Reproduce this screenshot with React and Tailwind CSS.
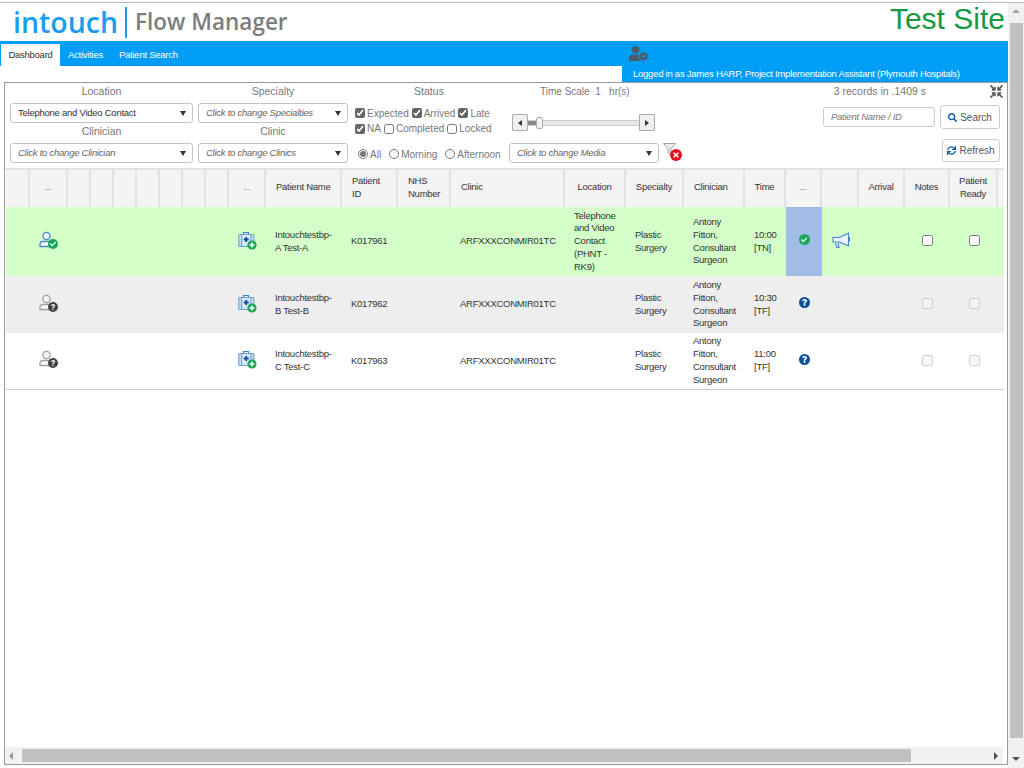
import React from 'react';
import { FaCheck, FaCompressArrowsAlt, FaQuestion, FaSearch, FaSync, FaTimes, FaUserCog } from 'react-icons/fa';

const gridCols = 'grid grid-cols-[24px_38px_23px_23px_23px_23px_23px_23px_23px_37px_76px_56px_53px_114px_61px_58px_61px_41px_36px_37px_46px_45px_48px_5px]';

const headers = ['', '...', '', '', '', '', '', '', '', '...', 'Patient Name', 'Patient ID', 'NHS Number', 'Clinic', 'Location', 'Specialty', 'Clinician', 'Time', '...', '', 'Arrival', 'Notes', 'Patient Ready'];

const rows = [
  { name: 'Intouchtestbp-A Test-A', id: 'K017961', location: 'Telephone and Video Contact (PHNT - RK9)', time: '10:00 [TN]', bg: 'bg-[#d4ffc8]', h: 'h-[69px]', arrived: true },
  { name: 'Intouchtestbp-B Test-B', id: 'K017962', location: '', time: '10:30 [TF]', bg: 'bg-[#eeeeee]', h: 'h-[57px]' },
  { name: 'Intouchtestbp-C Test-C', id: 'K017963', location: '', time: '11:00 [TF]', bg: 'bg-white', h: 'h-[56px]' },
];

function Select({ text, italic, className }) {
  return (
    <div className={`flex h-[20px] items-center justify-between rounded-[3px] border border-[#c4c4c4] bg-white pl-[7px] pr-[6px] text-[9.5px] tracking-[-0.25px] ${italic ? 'italic text-[#666]' : 'text-[#333]'} ${className}`}>
      <span className="pt-[1px]">{text}</span>
      <span className="h-0 w-0 border-x-[3.5px] border-t-[5px] border-x-transparent border-t-[#333]" />
    </div>
  );
}

function Label({ text }) {
  return <div className="flex h-[20px] justify-center pb-[4px] text-[10.5px] leading-[16px] text-[#777]">{text}</div>;
}

function Check({ label, checked }) {
  return (
    <label className="flex items-center gap-[2px] text-[10px] text-[#777]">
      <input type="checkbox" defaultChecked={checked} className="m-0 h-[10px] w-[10px] accent-[#666]" />
      {label}
    </label>
  );
}

function Radio({ label, checked }) {
  return (
    <label className="flex items-center gap-[2px] text-[10px] text-[#777]">
      <input type="radio" name="period" defaultChecked={checked} className="m-0 h-[10px] w-[10px] accent-[#777]" />
      {label}
    </label>
  );
}

function Slider() {
  return (
    <div className="flex h-[17px] w-[143px] items-center">
      <div className="flex h-[17px] w-[16px] shrink-0 items-center justify-center rounded-[1px] border border-[#aaa] bg-[#f0f0f0]">
        <span className="h-0 w-0 border-y-[3px] border-r-[4px] border-y-transparent border-r-[#333]" />
      </div>
      <div className="relative h-[6px] flex-1 border-y border-[#ccc] bg-[#e8e8e8]">
        <div className="h-full w-[8px] bg-[#888]" />
        <div className="absolute left-[8px] top-[-4px] h-[12px] w-[7px] rounded-[2px] border border-[#aaa] bg-[#f2f2f2]" />
      </div>
      <div className="flex h-[17px] w-[16px] shrink-0 items-center justify-center rounded-[1px] border border-[#aaa] bg-[#f0f0f0]">
        <span className="h-0 w-0 border-y-[3px] border-l-[4px] border-y-transparent border-l-[#333]" />
      </div>
    </div>
  );
}

function UserIcon({ arrived }) {
  const line = arrived ? '#4a86c8' : '#a0a0a0';
  return (
    <div className="relative h-[20px] w-[20px]">
      <svg width="18" height="18" viewBox="0 0 18 18" fill="none" stroke={line} strokeWidth="1.3">
        <circle cx="7.5" cy="5" r="3.6" fill={arrived ? '#e6f0ff' : '#f8f8f8'} />
        <path d="M1 15.5v-2c0-2 1.500-3 3.500-3h6v5z" fill="#fff" />
      </svg>
      <span className={`absolute left-[9px] top-[8px] flex h-[10px] w-[10px] items-center justify-center rounded-full text-white ${arrived ? 'bg-[#1aa657]' : 'bg-[#444]'}`}>
        {arrived ? <FaCheck size={6} /> : <FaQuestion size={6} />}
      </span>
    </div>
  );
}

function CaseIcon() {
  return (
    <svg width="19" height="19" viewBox="0 0 19 19" fill="none">
      <path d="M5.500 3.500v-2h5v2" stroke="#3f82c4" strokeWidth="1.200" />
      <rect x="0.800" y="3.500" width="15" height="12" rx="1" fill="#d9e8f8" stroke="#6f9fd4" strokeWidth="1.200" />
      <path d="M3.500 3.500v12M13 3.500v12" stroke="#6f9fd4" strokeWidth="1.200" />
      <path d="M8.200 6v5M5.700 8.500h5" stroke="#0b4f9c" strokeWidth="1.800" />
      <circle cx="14" cy="14" r="4.600" fill="#1aa657" />
      <path d="M14 11.500v5M11.500 14h5" stroke="#fff" strokeWidth="1.600" />
    </svg>
  );
}

function HornIcon() {
  return (
    <svg width="18" height="17" viewBox="0 0 18 17" fill="none" stroke="#4a86c8" strokeWidth="1.100">
      <path d="M1 5.500h6.500L16.500 1.200v12.600L7.500 10H1z" fill="#eaf6ff" />
      <path d="M16.500 5.500h1v3.500h-1" />
      <path d="M3.500 10l1.200 5.500h2.300L6 10" fill="#eaf6ff" />
    </svg>
  );
}

function FilterOff() {
  return (
    <div className="relative ml-[4px] h-[19px] w-[19px]">
      <svg width="13" height="13" viewBox="0 0 13 13" fill="#eee" stroke="#999" strokeWidth="0.900">
        <path d="M0.500 0.500h12L7.800 6v6L5.200 10V6z" />
      </svg>
      <span className="absolute left-[7px] top-[6px] flex h-[12px] w-[12px] items-center justify-center rounded-full bg-[#e8101f] text-white">
        <FaTimes size={8} />
      </span>
    </div>
  );
}

function HeaderRow() {
  return (
    <div className={`${gridCols} h-[39px] border-t-2 border-[#e2e2e2] bg-[#f4f4f4] text-[9.5px] leading-[12.800px] tracking-[-0.25px] text-[#333]`}>
      {headers.map((h, i) => (
        <div key={i} className={`flex items-center border-r-2 border-[#e2e2e2] pb-[2px] ${h === '...' ? 'justify-center text-[#777]' : i === 10 ? 'whitespace-nowrap pl-[10px]' : i === 11 || i === 12 || i === 13 || i === 16 ? 'px-[10px]' : 'justify-center px-[4px] text-center'}`}>
          {h}
        </div>
      ))}
      <div />
    </div>
  );
}

function Row({ r }) {
  const disabled = !r.arrived;
  const textCell = 'flex items-center px-[9px]';
  return (
    <div className={`${gridCols} ${r.h} ${r.bg} text-[9.5px] leading-[12.800px] tracking-[-0.25px] text-[#333]`}>
      <div />
      <div className="flex items-center justify-center pb-[2px]"><UserIcon arrived={r.arrived} /></div>
      <div className="col-span-7" />
      <div className="flex items-center justify-center pb-[3px] pr-[1px]"><CaseIcon /></div>
      <div className={textCell}>{r.name}</div>
      <div className={textCell}>{r.id}</div>
      <div />
      <div className={`${textCell} pr-0`}>ARFXXXCONMIR01TC</div>
      <div className={textCell}>{r.location}</div>
      <div className={textCell}>Plastic Surgery</div>
      <div className={`${textCell} pr-[4px]`}>Antony Fitton, Consultant Surgeon</div>
      <div className={textCell}>{r.time}</div>
      <div className={`flex items-center justify-center pb-[4px] ${r.arrived ? 'bg-[#a0bde8]' : ''}`}>
        <span className={`flex h-[11px] w-[11px] items-center justify-center rounded-full text-white ${r.arrived ? 'bg-[#1aa657]' : 'bg-[#0b4f9c]'}`}>
          {r.arrived ? <FaCheck size={6} /> : <FaQuestion size={7} />}
        </span>
      </div>
      <div className="flex items-center justify-center pb-[3px]">{r.arrived && <HornIcon />}</div>
      <div />
      <div className="flex items-center justify-center pb-[2px]">
        <input type="checkbox" disabled={disabled} className="m-0 h-[11px] w-[11px]" />
      </div>
      <div className="flex items-center justify-center pb-[2px]">
        <input type="checkbox" disabled={disabled} className="m-0 h-[11px] w-[11px]" />
      </div>
      <div />
    </div>
  );
}

export default function App() {
  return (
    <div className="h-[768px] w-[1024px] overflow-hidden bg-white pt-[2px] font-['Liberation_Sans',Arial,sans-serif]">
      <div className="flex h-[766px] border-t border-[#bbb]">
        <div className="flex w-[1008px] flex-col">
          <div className="flex h-[38px] justify-between pl-[13px] pr-[3px]">
            <div className="flex items-center">
              <span className="font-['Open_Sans',sans-serif] text-[28.500px] font-semibold leading-none text-[#1a9cf0]">intouch</span>
              <span className="ml-[7px] mr-[8px] h-[31px] w-[2px] bg-[#1a9cf0]" />
              <span className="font-['Open_Sans',sans-serif] text-[22.500px] font-semibold leading-none text-[#7d7d7d]">Flow Manager</span>
            </div>
            <span className="text-[30px] leading-[32px] text-[#149a43]">Test Site</span>
          </div>

          <div className="flex h-[41px]">
            <div className="h-[25px] w-[622px] bg-[#009ef7] pl-[1px] pt-[3px]">
              <div className="flex h-[22px] items-center text-[9.5px] tracking-[-0.25px] text-white">
                <span className="flex h-full w-[59px] items-center justify-center bg-white text-[#333]">Dashboard</span>
                <span className="ml-[8px]">Activities</span>
                <span className="ml-[16px]">Patient Search</span>
              </div>
            </div>
            <div className="flex w-[386px] flex-col bg-[#009ef7] pl-[11px] text-white">
              <div className="h-[25px] pt-[3px]">
                <FaUserCog size={19} className="ml-[-4px] text-[#4d5b66]" />
              </div>
              <div className="flex h-[16px] items-center text-[9.5px] tracking-[-0.25px]">Logged in as James HARP, Project Implementation Assistant (Plymouth Hospitals)</div>
            </div>
          </div>

          <div className="ml-[4px] flex min-h-0 flex-1 flex-col border border-[#999]">
            <div className="flex h-[85px] shrink-0 pl-[5px]">
              <div className="w-[183px]">
                <Label text="Location" />
                <Select text="Telephone and Video Contact" />
                <Label text="Clinician" />
                <Select text="Click to change Clinician" italic />
              </div>
              <div className="ml-[5px] w-[150px]">
                <Label text="Specialty" />
                <Select text="Click to change Specialties" italic />
                <Label text="Clinic" />
                <Select text="Click to change Clinics" italic />
              </div>
              <div className="ml-[7px] w-[148px]">
                <Label text="Status" />
                <div className="flex h-[20px] items-center gap-[3px]">
                  <Check label="Expected" checked />
                  <Check label="Arrived" checked />
                  <Check label="Late" checked />
                </div>
                <div className="flex h-[11px] items-center gap-[3px]">
                  <Check label="NA" checked />
                  <Check label="Completed" />
                  <Check label="Locked" />
                </div>
                <div className="mt-[10px] flex h-[20px] items-center gap-[8px] pl-[3px]">
                  <Radio label="All" checked />
                  <Radio label="Morning" />
                  <Radio label="Afternoon" />
                </div>
              </div>
              <div className="ml-[6px] flex w-[173px] flex-col">
                <div className="flex h-[20px] pl-[31px] pt-[2px] text-[10px] leading-[14px] text-[#777]">Time Scale&nbsp; 1&nbsp; &nbsp;hr(s)</div>
                <div className="ml-[3px] mt-[11px]"><Slider /></div>
                <div className="mt-[12px] flex">
                  <Select text="Click to change Media" italic className="w-[151px]" />
                  <FilterOff />
                </div>
              </div>
              <div className="ml-[-9px] flex flex-1 flex-col pr-[7px]">
                <div className="flex h-[22px] items-start justify-end pt-[1px]">
                  <span className="mr-[64px] text-[10.500px] text-[#777]">3 records in .1409 s</span>
                  <FaCompressArrowsAlt size={13} className="mr-[-3px] mt-[1px] text-[#555]" />
                </div>
                <div className="flex items-center justify-end">
                  <div className="flex h-[20px] w-[112px] items-center rounded-[3px] border border-[#ccc] pl-[7px] text-[9.5px] italic tracking-[-0.25px] text-[#777]">Patient Name / ID</div>
                  <div className="ml-[5px] flex h-[24px] w-[60px] items-center justify-center gap-[3px] rounded-[3px] border border-[#ccc] text-[10px] text-[#555]">
                    <FaSearch size={9} className="text-[#0b5aa8]" />Search
                  </div>
                </div>
                <div className="mt-[10px] flex justify-end">
                  <div className="flex h-[23px] w-[58px] items-center justify-center gap-[3px] rounded-[3px] border border-[#ccc] text-[10px] text-[#555]">
                    <FaSync size={9} className="text-[#0b5aa8]" />Refresh
                  </div>
                </div>
              </div>
            </div>

            <div className="ml-[1px] w-[998px] border-b border-[#ccc]">
              <HeaderRow />
              {rows.map(r => <Row key={r.id} r={r} />)}
            </div>

            <div className="flex-1" />

            <div className="flex h-[17px] w-[998px] shrink-0 items-center bg-[#f1f1f1]">
              <span className="ml-[4px] h-0 w-0 border-y-[4px] border-r-[4px] border-y-transparent border-r-[#999]" />
              <div className="ml-[9px] h-[13px] w-[889px] bg-[#c1c1c1]" />
              <span className="ml-auto mr-[5px] h-0 w-0 border-y-[4px] border-l-[4px] border-y-transparent border-l-[#505050]" />
            </div>
          </div>
          <div className="h-[3px] shrink-0" />
        </div>

        <div className="flex w-[16px] flex-col items-center bg-[#f1f1f1] pt-[6px]">
          <span className="h-0 w-0 border-x-[4px] border-b-[4px] border-x-transparent border-b-[#a3a3a3]" />
          <div className="mt-[10px] h-[715px] w-[13px] bg-[#c1c1c1]" />
          <span className="mt-[19px] h-0 w-0 border-x-[4px] border-t-[4px] border-x-transparent border-t-[#505050]" />
        </div>
      </div>
    </div>
  );
}
